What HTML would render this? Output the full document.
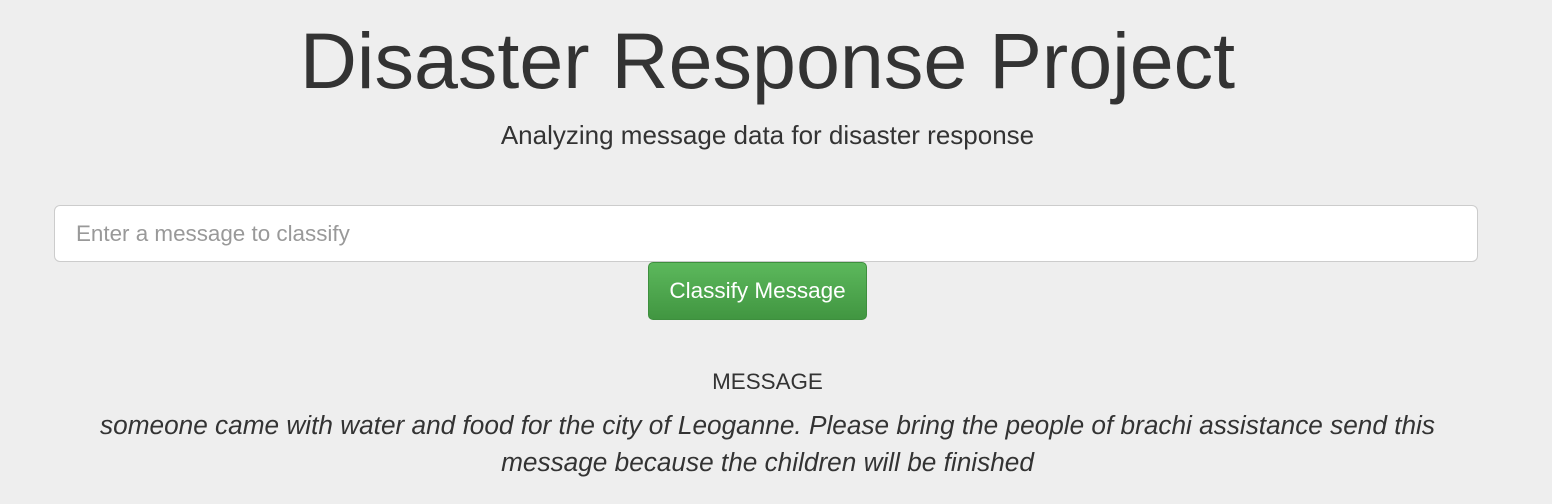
<!DOCTYPE html>
<html><head><style>
body{margin:0;width:1552px;height:504px;background:#eeeeee;font-family:"Liberation Sans",Arial,sans-serif;color:#333;overflow:hidden;position:relative}
.t{position:absolute;left:0;width:1535px;text-align:center}
h1{margin:0;font-weight:400;font-size:79px;top:13px;line-height:96px}
.sub{font-size:26px;top:119px;line-height:32px}
.inp{position:absolute;left:54px;top:205px;width:1422px;height:55px;background:#fff;border:1px solid #ccc;border-radius:6px;box-sizing:content-box}
.inp span{position:absolute;left:21px;top:15px;font-size:22.4px;color:#999}
.btn{position:absolute;left:648px;top:262px;width:217px;height:56px;border:1px solid #3e8f3e;border-radius:5px;background:linear-gradient(#5cb85c,#419641);color:#fff;font-size:22.5px;text-align:center;line-height:56px}
.m{font-size:22.4px;top:369px;line-height:26px}
.txt{font-size:26.2px;font-style:italic;top:407px;line-height:37px;left:80px;width:1375px}
</style></head><body>
<h1 class="t">Disaster Response Project</h1>
<div class="t sub">Analyzing message data for disaster response</div>
<div class="inp"><span>Enter a message to classify</span></div>
<div class="btn">Classify Message</div>
<div class="t m">MESSAGE</div>
<div class="t txt">someone came with water and food for the city of Leoganne. Please bring the people of brachi assistance send this message because the children will be finished</div>
</body></html>
